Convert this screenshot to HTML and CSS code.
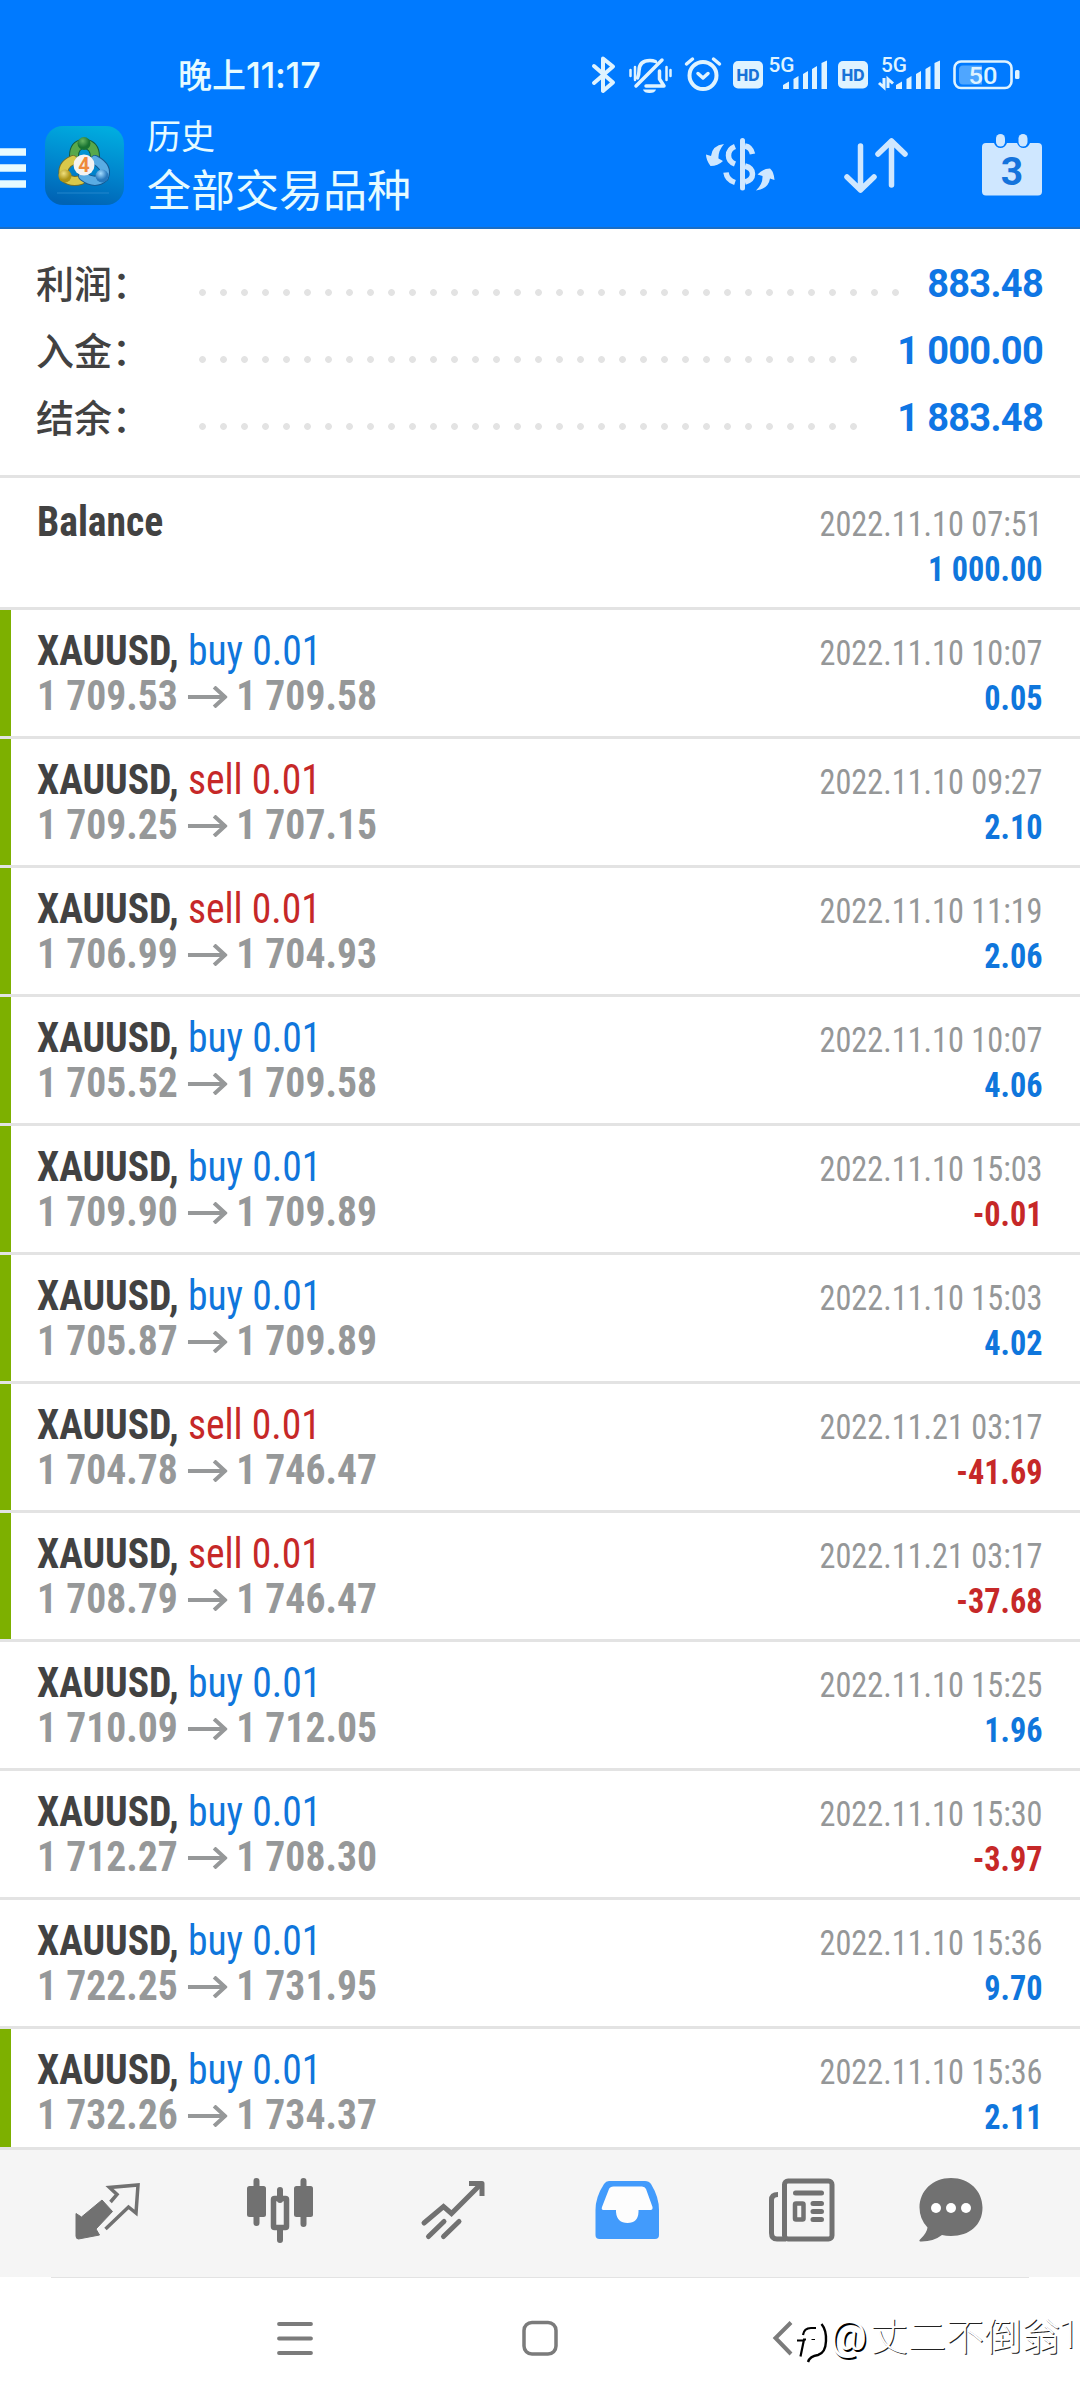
FILE: index.html
```
<!DOCTYPE html>
<html lang="zh-CN">
<head>
<meta charset="utf-8">
<title>历史</title>
<link rel="stylesheet" href="styles.css">
</head>
<body>
<div class="screen">
<svg class="defs" width="0" height="0">
  <symbol id="arrow" viewBox="0 0 40 22" preserveAspectRatio="none"><path d="M0 11H38M26.500 1L37.500 11L26.500 21" fill="none" stroke="currentColor" stroke-width="4"/></symbol>
</svg>
<header class="header">
  <div class="status">
    <div class="clock"><span>晚上</span><span class="clock-num">11:17</span></div>
    <div class="status-icons">
      <svg width="34" height="40" viewBox="586 54 34 40"><path d="M594 66L613 82.500L603 91V58.500L613 66.500L594 83" fill="none" stroke="currentColor" stroke-width="4" stroke-linejoin="round" stroke-linecap="round"/></svg>
      <svg width="46" height="40" viewBox="627 54 46 40"><g fill="none" stroke="currentColor" stroke-width="3.500" stroke-linecap="round" stroke-linejoin="round"><path d="M636 86L662 60M637.500 78Q639 75 639 71Q639 60.500 650 60.500Q653 60.500 655.500 61.500M646 86H664L659.500 79V71"/><path d="M630.500 70V76M635 67V80M666.500 67V80M670.500 70V76" stroke-width="2.500"/></g><path d="M643 89.500H656Q655 93 649.500 93T643 89.500Z" fill="currentColor"/></svg>
      <svg width="40" height="40" viewBox="683 54 40 40"><g fill="none" stroke="currentColor" stroke-width="4" stroke-linecap="round" stroke-linejoin="round"><circle cx="703" cy="75.500" r="13.500"/><path d="M698 73.500L703 78L708 73.500M686.500 64L692.500 59M719.500 64L713.500 59" stroke-width="3.500"/></g></svg>
      <svg width="98" height="40" viewBox="731 54 98 40"><rect x="733" y="61" width="30" height="27.500" rx="5" fill="currentColor"/><text class="hd" x="748" y="80.500" textLength="23" lengthAdjust="spacingAndGlyphs">HD</text><text class="net" x="768.500" y="71.500" textLength="26" lengthAdjust="spacingAndGlyphs">5G</text><path d="M783 89V85L789 81.500V89ZM793.500 89V79L798.500 76V89ZM803 89V74L808 71V89ZM812 89V69L817 66V89ZM821.500 89V63L827 60.500V89Z" fill="currentColor"/></svg>
      <svg width="106" height="40" viewBox="836 54 106 40"><rect x="838" y="61" width="30" height="27.500" rx="5" fill="currentColor"/><text class="hd" x="853" y="80.500" textLength="23" lengthAdjust="spacingAndGlyphs">HD</text><text class="net" x="881" y="71.500" textLength="26" lengthAdjust="spacingAndGlyphs">5G</text><path d="M896 89V85L902 81.500V89ZM906.500 89V79L911.500 76V89ZM916 89V74L921 71V89ZM925.500 89V69L930.500 66V89ZM934.500 89V63L940 60.500V89Z" fill="currentColor"/><path d="M884 78V87.500L879 83M888 88V79L893 83.500" fill="none" stroke="currentColor" stroke-width="3"/></svg>
      <svg width="70" height="40" viewBox="951 54 70 40"><rect x="954.500" y="61.500" width="57" height="26.500" rx="6.500" fill="none" stroke="currentColor" stroke-width="2.600"/><path d="M963 65.500H982V84.500H963Q959 84.500 959 80V70Q959 65.500 963 65.500Z" fill="#4fa6ff"/><rect x="1015" y="70" width="4.500" height="9" rx="1.500" fill="currentColor"/><text class="bat" x="983" y="83.500" textLength="29" lengthAdjust="spacingAndGlyphs">50</text></svg>
    </div>
  </div>
  <div class="appbar">
    <svg class="menu" width="26" height="40" viewBox="0 0 26 40"><path d="M0 4H26M0 20H26M0 36H26" stroke="currentColor" stroke-width="7.500"/></svg>
    <svg class="logo" width="79" height="79" viewBox="0 0 79 79">
      <defs>
        <linearGradient id="lg" x1=".6" y1="0" x2=".4" y2="1"><stop offset="0" stop-color="#00acdf"/><stop offset=".55" stop-color="#0084cd"/><stop offset="1" stop-color="#0063b4"/></linearGradient>
        <radialGradient id="gg" cx=".4" cy=".3"><stop offset="0" stop-color="#69b764"/><stop offset="1" stop-color="#187331"/></radialGradient>
        <radialGradient id="gy" cx=".4" cy=".3"><stop offset="0" stop-color="#f0df7c"/><stop offset="1" stop-color="#ad9418"/></radialGradient>
        <radialGradient id="gb" cx=".4" cy=".3"><stop offset="0" stop-color="#a3dcff"/><stop offset="1" stop-color="#2778bd"/></radialGradient>
      </defs>
      <rect width="79" height="79" rx="18" fill="url(#lg)"/>
      <path d="M12 67H64" stroke="#2286cc" stroke-width="1"/>
      <g fill="none" stroke-linecap="round">
        <path d="M29 30Q29 19 39 17.500Q50 19 50 31" stroke="#145b3b" stroke-width="10"/><path d="M29 30Q29 19 39 17.500Q50 19 50 31" stroke="#57a84b" stroke-width="8"/>
        <path d="M28 34Q16 39 19 51Q26 57 36 54" stroke="#6e6d2d" stroke-width="10"/><path d="M28 34Q16 39 19 51Q26 57 36 54" stroke="#d9c84a" stroke-width="8"/>
        <path d="M50 34Q63 41 59 51Q50 59 38 50" stroke="#155a92" stroke-width="10"/><path d="M50 34Q63 41 59 51Q50 59 38 50" stroke="#5aace3" stroke-width="8"/>
      </g>
      <circle cx="39" cy="17.500" r="6.500" fill="url(#gg)"/><circle cx="20" cy="50" r="6.500" fill="url(#gy)"/><circle cx="57" cy="50" r="6.500" fill="url(#gb)"/>
      <circle cx="39" cy="39" r="10.500" fill="#f5f3f1"/><text class="four" x="39" y="46">4</text>
    </svg>
    <div class="titles"><div class="sub">历史</div><div class="title">全部交易品种</div></div>
    <div class="actions">
      <svg width="72" height="64" viewBox="704 132 72 64"><path d="M742.500 140.500V188" stroke="currentColor" stroke-width="5" stroke-linecap="round"/><g fill="none" stroke="currentColor" stroke-width="5.500"><path d="M735 146.500Q728.500 149 728.500 155.500Q728.500 161.500 735 164M745 146Q751 147 752.500 154M745 166Q752.500 168 752.500 174T745 182M726 172.500Q727 180 735 182.500"/></g><path d="M724 144Q712 145.500 711 156L706 154.500Q706 160 710.500 166Q718 166 723 161L718.500 158.500Q718 151 724 144ZM756 190.500Q768.500 189 770 178.500L774.500 180Q774 172 770 168.500Q763 168.500 757.500 174.500L762.500 176Q763 184 756 190.500Z" fill="currentColor"/></svg>
      <svg width="70" height="64" viewBox="841 132 70 64"><path d="M860.500 146V190M847 177L860.500 190L874 177M891.500 185V141M878 154L891.500 141L905 154" fill="none" stroke="currentColor" stroke-width="5.500" stroke-linecap="round" stroke-linejoin="round"/></svg>
      <svg width="64" height="66" viewBox="980 132 64 66"><path d="M986 143H994Q996 148 1000.500 148T1007 143H1017Q1019 148 1023.500 148T1030 143H1038Q1042 143 1042 147V191.500Q1042 195.500 1038 195.500H986Q982 195.500 982 191.500V147Q982 143 986 143Z" fill="currentColor"/><rect x="996" y="134" width="9" height="12.500" rx="4.500" fill="currentColor"/><rect x="1018.500" y="134" width="9" height="12.500" rx="4.500" fill="currentColor"/><text class="day" x="1012" y="184.500">3</text></svg>
    </div>
  </div>
</header>

<section class="summary">
  <div class="sum"><span class="label">利润：</span><span class="dots"></span><span class="value">883.48</span></div>
  <div class="sum"><span class="label">入金：</span><span class="dots wide"></span><span class="value">1 000.00</span></div>
  <div class="sum"><span class="label">结余：</span><span class="dots wide"></span><span class="value">1 883.48</span></div>
</section>

<main class="list">
  <div class="row first"><div class="deal"><div><b>Balance</b></div></div><div class="meta"><div>2022.11.10 07:51</div><b class="buy">1 000.00</b></div></div>
  <div class="row open"><div class="deal"><div><b>XAUUSD,</b> <span class="buy">buy 0.01</span></div><div class="price">1 709.53<svg><use href="#arrow"/></svg>1 709.58</div></div><div class="meta"><div>2022.11.10 10:07</div><b class="buy">0.05</b></div></div>
  <div class="row open"><div class="deal"><div><b>XAUUSD,</b> <span class="sell">sell 0.01</span></div><div class="price">1 709.25<svg><use href="#arrow"/></svg>1 707.15</div></div><div class="meta"><div>2022.11.10 09:27</div><b class="buy">2.10</b></div></div>
  <div class="row open"><div class="deal"><div><b>XAUUSD,</b> <span class="sell">sell 0.01</span></div><div class="price">1 706.99<svg><use href="#arrow"/></svg>1 704.93</div></div><div class="meta"><div>2022.11.10 11:19</div><b class="buy">2.06</b></div></div>
  <div class="row open"><div class="deal"><div><b>XAUUSD,</b> <span class="buy">buy 0.01</span></div><div class="price">1 705.52<svg><use href="#arrow"/></svg>1 709.58</div></div><div class="meta"><div>2022.11.10 10:07</div><b class="buy">4.06</b></div></div>
  <div class="row open"><div class="deal"><div><b>XAUUSD,</b> <span class="buy">buy 0.01</span></div><div class="price">1 709.90<svg><use href="#arrow"/></svg>1 709.89</div></div><div class="meta"><div>2022.11.10 15:03</div><b class="sell">-0.01</b></div></div>
  <div class="row open"><div class="deal"><div><b>XAUUSD,</b> <span class="buy">buy 0.01</span></div><div class="price">1 705.87<svg><use href="#arrow"/></svg>1 709.89</div></div><div class="meta"><div>2022.11.10 15:03</div><b class="buy">4.02</b></div></div>
  <div class="row open"><div class="deal"><div><b>XAUUSD,</b> <span class="sell">sell 0.01</span></div><div class="price">1 704.78<svg><use href="#arrow"/></svg>1 746.47</div></div><div class="meta"><div>2022.11.21 03:17</div><b class="sell">-41.69</b></div></div>
  <div class="row open"><div class="deal"><div><b>XAUUSD,</b> <span class="sell">sell 0.01</span></div><div class="price">1 708.79<svg><use href="#arrow"/></svg>1 746.47</div></div><div class="meta"><div>2022.11.21 03:17</div><b class="sell">-37.68</b></div></div>
  <div class="row"><div class="deal"><div><b>XAUUSD,</b> <span class="buy">buy 0.01</span></div><div class="price">1 710.09<svg><use href="#arrow"/></svg>1 712.05</div></div><div class="meta"><div>2022.11.10 15:25</div><b class="buy">1.96</b></div></div>
  <div class="row"><div class="deal"><div><b>XAUUSD,</b> <span class="buy">buy 0.01</span></div><div class="price">1 712.27<svg><use href="#arrow"/></svg>1 708.30</div></div><div class="meta"><div>2022.11.10 15:30</div><b class="sell">-3.97</b></div></div>
  <div class="row"><div class="deal"><div><b>XAUUSD,</b> <span class="buy">buy 0.01</span></div><div class="price">1 722.25<svg><use href="#arrow"/></svg>1 731.95</div></div><div class="meta"><div>2022.11.10 15:36</div><b class="buy">9.70</b></div></div>
  <div class="row open"><div class="deal"><div><b>XAUUSD,</b> <span class="buy">buy 0.01</span></div><div class="price">1 732.26<svg><use href="#arrow"/></svg>1 734.37</div></div><div class="meta"><div>2022.11.10 15:36</div><b class="buy">2.11</b></div></div>
</main>

<nav class="tabs">
  <svg width="70" height="70" viewBox="73 2175 70 70"><path d="M102 2200L112.500 2211.500L96 2229L99.500 2235L78.500 2239Q76 2239 76 2236V2213.500L81.500 2217Z" fill="currentColor" stroke="currentColor" stroke-width="1" stroke-linejoin="round"/><path d="M110.500 2202L117 2194.500L109.500 2187.500L138 2185L136 2213L128.500 2207L105.500 2229" fill="none" stroke="currentColor" stroke-width="3.500"/></svg>
  <svg width="70" height="70" viewBox="245 2175 70 70"><path d="M256.500 2181V2223M303.500 2181V2224M280 2190V2200M280 2230V2240" stroke="currentColor" stroke-width="6" stroke-linecap="round"/><rect x="247" y="2186" width="19" height="31" rx="2.500" fill="currentColor"/><rect x="294" y="2186" width="19" height="31" rx="2.500" fill="currentColor"/><rect x="273.500" y="2198.500" width="13" height="29" rx="1" fill="none" stroke="currentColor" stroke-width="5.500"/></svg>
  <svg width="70" height="70" viewBox="418 2175 70 70"><g fill="none" stroke="currentColor" stroke-width="5"><path d="M424 2223L443.500 2206.500L451.500 2213.500L481 2184" stroke-linecap="round"/><path d="M469 2183.500H482V2196" stroke-linejoin="round"/><path d="M428.500 2236.500L444 2221.500M443.500 2236.500L459 2221.500" stroke-linecap="round"/></g></svg>
  <svg class="on" width="70" height="70" viewBox="592 2175 70 70"><path d="M609 2181H645Q649 2181 651 2184Q659 2197 659 2210V2235Q659 2239 655 2239H599.500Q595.500 2239 595.500 2235V2210Q595.500 2197 604 2184Q606 2181 609 2181Z" fill="currentColor"/><path d="M613.500 2186.500H642Q645 2186.500 646 2189L652.500 2207Q653 2210 650.500 2210H638.500V2212Q638 2223 627.500 2223T616 2212V2210H603.500Q601 2210 602 2207L609 2189Q610 2186.500 613.500 2186.500Z" fill="#fdfdfd"/></svg>
  <svg width="70" height="70" viewBox="766 2175 70 70"><g fill="none" stroke="currentColor" stroke-width="5"><rect x="784.500" y="2181" width="47.500" height="58" rx="3.500"/><path d="M778 2194.500Q771.500 2194.500 771.500 2200V2233Q771.500 2239 777 2239H786"/><path d="M795.500 2193H821.500" stroke-linecap="round"/><path d="M813 2203.500H821.500M813 2211.500H821.500M813 2219.500H821.500" stroke-linecap="round"/><rect x="795" y="2203.500" width="8.500" height="16" stroke-width="4.500" rx="1"/></g></svg>
  <svg width="70" height="70" viewBox="916 2175 70 70"><path d="M951 2178C969.500 2178 982.500 2191 982.500 2207.500C982.500 2225 969.500 2236 951 2236Q946 2236 942 2235Q933 2242 920 2241.500Q918.500 2241 920 2239.500Q927 2233 927.500 2227.500Q919.500 2219 919.500 2207.500C919.500 2191 932.500 2178 951 2178Z" fill="currentColor"/><g fill="#fff"><circle cx="936" cy="2208" r="5"/><circle cx="951" cy="2208" r="5"/><circle cx="966" cy="2208" r="5"/></g></svg>
</nav>
<footer class="sysnav">
  <svg width="40" height="40" viewBox="275 2318 40 40"><path d="M279 2324H311M279 2338.500H311M279 2353H311" stroke="currentColor" stroke-width="3.800" stroke-linecap="round"/></svg>
  <svg width="40" height="40" viewBox="520 2318 40 40"><rect x="524" y="2322.500" width="32" height="31.500" rx="8" fill="none" stroke="currentColor" stroke-width="3.500"/></svg>
  <svg width="24" height="40" viewBox="770 2318 24 40"><path d="M791 2322.500L775.500 2338L791 2354" fill="none" stroke="currentColor" stroke-width="4"/></svg>
  <svg class="mark" width="34" height="46" viewBox="796 2320 34 46"><g fill="none" stroke="#000"><path d="M803 2335Q804 2328 811 2328H816M797 2340.500H803.500M806 2339.500H804L800.500 2356.500" stroke-width="2.200"/><path d="M821.500 2324Q826.500 2330 826 2341Q825.500 2353 818 2355Q810 2356 808 2362" stroke-width="2.400"/><path d="M811.500 2339.500H815" stroke-width="1"/></g></svg>
  <span class="handle"><span class="at">@</span>丈二不倒翁<span class="one">1</span></span>
</footer>
</div>
</body>
</html>
```
FILE: styles.css
```
* { box-sizing: border-box; }
body { margin: 0; background: #fff; }
.screen { width: 1080px; height: 2400px; overflow: hidden; display: flex; flex-direction: column; font-family: Roboto, "Noto Sans CJK SC", sans-serif; color: #424242; }
.defs { display: block; flex: none; height: 0; }
svg { display: block; flex: none; overflow: visible; }

.header { flex: none; height: 229px; background: #007aff; border-bottom: 2px solid #1a6ec6; color: #e6fbff; padding-top: 54px; }
.status { display: flex; height: 40px; padding-left: 178px; }
.clock { display: flex; width: 408px; font: 500 34px/40px "Noto Sans CJK SC", sans-serif; }
.clock-num { font: 500 36px/42px Inter, sans-serif; letter-spacing: -.4px; }
.status-icons { display: flex; color: #dff3ff; }
.status-icons svg:nth-child(2) { margin-left: 7px; }
.status-icons svg:nth-child(3) { margin-left: 10px; }
.status-icons svg:nth-child(4) { margin-left: 8px; }
.status-icons svg:nth-child(5) { margin-left: 7px; }
.status-icons svg:nth-child(6) { margin-left: 9px; }
.hd { font: 800 16px Inter, sans-serif; fill: #1872d8; text-anchor: middle; }
.net { font: 500 20px Roboto, sans-serif; fill: currentColor; }
.bat { font: 500 23.500px Roboto, sans-serif; fill: currentColor; text-anchor: middle; }
.four { font: 700 20px Roboto, sans-serif; fill: #ee8a3c; text-anchor: middle; }
.day { font: 700 39px Roboto, sans-serif; fill: #1473dc; text-anchor: middle; }

.appbar { display: flex; height: 133px; }
.menu { margin-top: 54px; }
.logo { margin: 32px 0 0 19px; }
.titles { margin: 16px 0 0 23px; width: 557px; font-family: "Noto Sans CJK SC", sans-serif; }
.sub { font-size: 34px; line-height: 50px; height: 50px; }
.title { font-size: 44px; line-height: 64px; margin-top: -4px; }
.actions { display: flex; margin-top: 38px; color: #cfe7ff; }
.actions svg:nth-child(2) { margin-left: 65px; }
.actions svg:nth-child(3) { margin-left: 69px; }

.summary { flex: none; height: 249px; padding: 22px 37px 0 36px; border-bottom: 3px solid #e3e3e3; }
.sum { display: flex; height: 67px; }
.label { width: 156px; font: 500 38px/61px "Noto Sans CJK SC", sans-serif; }
.dots { width: 714px; height: 21px; margin-top: 31px; background: radial-gradient(circle at 10.500px 10.500px, #e3e3e3 3px, transparent 3.800px) 0 0 / 21px 21px; }
.dots.wide { width: 672px; }
.value { margin-left: auto; font: 700 38px/67px Roboto, sans-serif; letter-spacing: -.7px; color: #0f76e4; white-space: nowrap; }

.list { height: 1669px; flex: none; overflow: hidden; font-family: "Roboto Condensed", Roboto, sans-serif; }
.row { display: flex; justify-content: space-between; height: 129px; padding: 18px 37px 0 37px; border-bottom: 3px solid #e3e3e3; font-size: 42px; line-height: 45px; }
.row.first { height: 132px; padding-top: 21px; }
.row.open { background: linear-gradient(#7db000, #7db000) 0 0 / 11px 100% no-repeat; }
.deal { transform: scaleX(.943); transform-origin: left; }
.price { display: flex; font-weight: 700; color: #969899; }
.price svg { width: 42px; height: 22px; margin: 13px 9.500px 0 10.500px; }
.meta { text-align: right; font-size: 34.500px; color: #959798; padding-top: 3px; transform: scaleX(.935); transform-origin: right; }
.meta b { display: block; }
.row .buy { color: #0f76dc; }
.row .sell { color: #c62828; }

.tabs { flex: none; display: flex; height: 130px; padding: 25px 0 0 73px; background: #f5f5f5; border-top: 3px solid #e3e3e3; color: #717171; }
.tabs svg:nth-child(2) { margin-left: 102px; }
.tabs svg:nth-child(3) { margin-left: 103px; }
.tabs svg:nth-child(4) { margin-left: 104px; }
.tabs svg:nth-child(5) { margin-left: 104px; }
.tabs svg:nth-child(6) { margin-left: 80px; }
.tabs .on { color: #429bfc; }
.sysnav { display: flex; height: 123px; padding: 41px 0 0 275px; color: #7b7b7b; background: linear-gradient(#e3e3e3, #e3e3e3) 51px 0 / 978px 1px no-repeat #fff; }
.sysnav svg:nth-child(2) { margin-left: 205px; }
.sysnav svg:nth-child(3) { margin-left: 210px; }
.sysnav .mark { margin: 2px 0 0 2px; }
.handle { display: flex; margin-top: -12px; font: 300 38px/56px "Noto Sans CJK SC", sans-serif; color: #fff; text-shadow: 1px 1px 0 #222; white-space: nowrap; }
.at { width: 40px; font: 400 41px/60px Roboto, sans-serif; text-shadow: 1.500px 1.500px 0 #000; }
.one { font: 300 39px/58px Roboto, sans-serif; margin-left: -2px; }
```
